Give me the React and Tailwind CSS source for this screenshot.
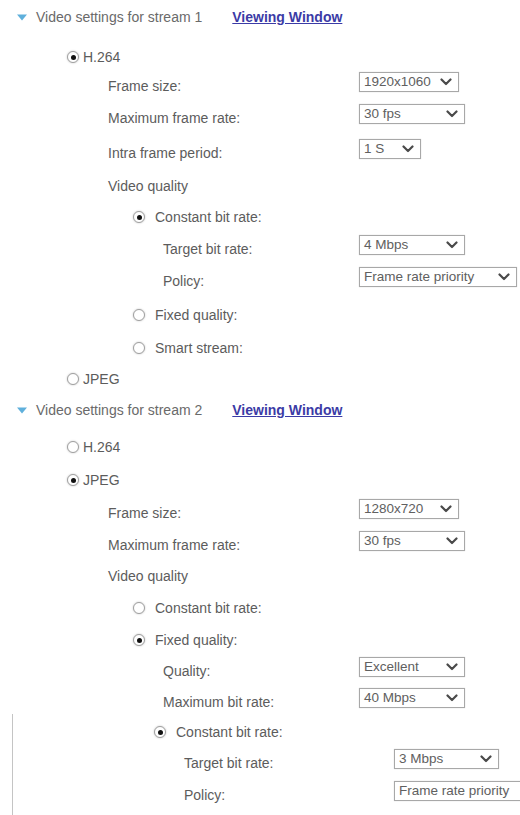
import React from "react";

const font = { fontFamily: '"Liberation Sans", Arial, sans-serif' };

function Radio({ checked }) {
  return (
    <span className="inline-flex w-[12px] h-[12px] rounded-full border border-[#a0a0a0] bg-white items-center justify-center shadow-[0_0_2px_rgba(0,0,0,0.25)] shrink-0">
      {checked && <span className="w-[5px] h-[5px] rounded-full bg-[#111]" />}
    </span>
  );
}

function Chevron() {
  return (
    <svg width="12" height="8" viewBox="0 0 12 8" className="shrink-0">
      <polyline points="1.5,1.5 6,6 10.5,1.5" fill="none" stroke="#4a4a4a" strokeWidth="2.2" strokeLinecap="round" strokeLinejoin="round" />
    </svg>
  );
}

function Select({ value, w, noChevron }) {
  return (
    <div
      className="h-[20px] border border-[#a8a8a8] bg-white flex items-center justify-between pl-[4px] pr-[6px] text-[13.5px] text-[#606060] shrink-0 shadow-[0_0_1px_rgba(0,0,0,0.2)]"
      style={{ width: w }}
    >
      <span className="whitespace-nowrap leading-none">{value}</span>
      {!noChevron && <Chevron />}
    </div>
  );
}

function Row({ mt, pl, labelW = 359, children, select }) {
  return (
    <div className="flex items-start h-[24px]" style={{ marginTop: mt }}>
      <div className="shrink-0 flex items-center gap-[4px] mt-[4px] h-[20px] whitespace-nowrap" style={{ width: labelW, paddingLeft: pl }}>
        {children}
      </div>
      {select}
    </div>
  );
}

function Header({ mt, n }) {
  return (
    <div className="flex items-start h-[24px]" style={{ marginTop: mt }}>
      <div className="mt-[4px] h-[20px] flex items-center pl-[17px] whitespace-nowrap">
        <svg width="10" height="7" viewBox="0 0 10 7" className="shrink-0">
          <polygon points="0,0.5 10,0.5 5,6.5" fill="#5fb0dc" />
        </svg>
        <span className="ml-[9px] text-[14px] text-[#6a6a6a]">Video settings for stream {n}</span>
        <span className="ml-[30px] text-[14px] font-bold text-[#3b3ba6] underline">Viewing Window</span>
      </div>
    </div>
  );
}

export default function App() {
  return (
    <div className="w-[520px] h-[815px] overflow-hidden bg-white text-[14px] text-[#5c5c5c]" style={font}>
      <div className="pt-[3px]">
        <Header mt={0} n={1} />
        <Row mt={16} pl={67}><Radio checked /><span>H.264</span></Row>
        <Row mt={5} pl={108} select={<Select value="1920x1060" w={100} />}>Frame size:</Row>
        <Row mt={8} pl={108} select={<Select value="30 fps" w={106} />}>Maximum frame rate:</Row>
        <Row mt={11} pl={108} select={<Select value="1 S" w={62} />}>Intra frame period:</Row>
        <Row mt={9} pl={108}>Video quality</Row>
        <Row mt={7} pl={133}><Radio checked /><span className="ml-[6px]">Constant bit rate:</span></Row>
        <Row mt={8} pl={163} select={<Select value="4 Mbps" w={106} />}>Target bit rate:</Row>
        <Row mt={8} pl={163} select={<Select value="Frame rate priority" w={158} />}>Policy:</Row>
        <Row mt={10} pl={133}><Radio /><span className="ml-[6px]">Fixed quality:</span></Row>
        <Row mt={9} pl={133}><Radio /><span className="ml-[6px]">Smart stream:</span></Row>
        <Row mt={7} pl={67}><Radio /><span>JPEG</span></Row>
        <Header mt={7} n={2} />
        <Row mt={13} pl={67}><Radio /><span>H.264</span></Row>
        <Row mt={9} pl={67}><Radio checked /><span>JPEG</span></Row>
        <Row mt={9} pl={108} select={<Select value="1280x720" w={100} />}>Frame size:</Row>
        <Row mt={8} pl={108} select={<Select value="30 fps" w={106} />}>Maximum frame rate:</Row>
        <Row mt={7} pl={108}>Video quality</Row>
        <Row mt={8} pl={133}><Radio /><span className="ml-[6px]">Constant bit rate:</span></Row>
        <Row mt={8} pl={133}><Radio checked /><span className="ml-[6px]">Fixed quality:</span></Row>
        <Row mt={7} pl={163} select={<Select value="Excellent" w={106} />}>Quality:</Row>
        <Row mt={7} pl={163} select={<Select value="40 Mbps" w={106} />}>Maximum bit rate:</Row>
        <div className="ml-[12px] border-l border-[#c4c4c4] mt-[2px] pt-[4px] h-[200px]">
          <Row mt={0} pl={141} labelW={381}><Radio checked /><span className="ml-[6px]">Constant bit rate:</span></Row>
          <Row mt={7} pl={171} labelW={381} select={<Select value="3 Mbps" w={105} />}>Target bit rate:</Row>
          <Row mt={8} pl={171} labelW={381} select={<Select value="Frame rate priority" w={150} noChevron />}>Policy:</Row>
        </div>
      </div>
    </div>
  );
}
